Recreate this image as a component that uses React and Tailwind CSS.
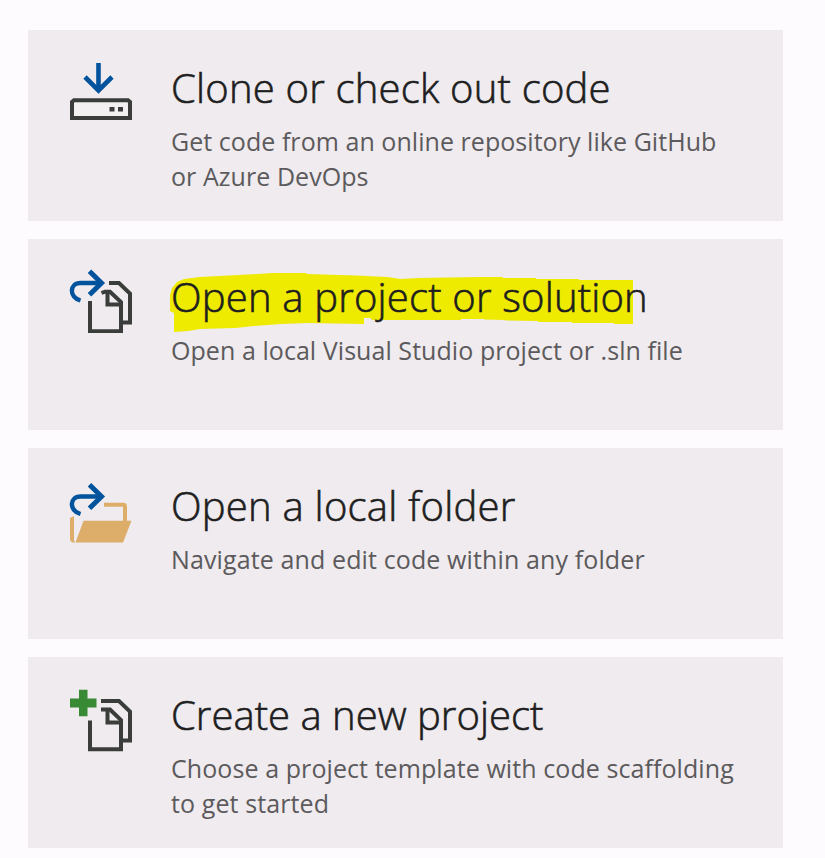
const FONT = "font-['Open_Sans','Noto_Sans',sans-serif]";

function Arrow({ y }) {
  return (
    <g fill="none" stroke="#00539c" strokeWidth="4.4">
      <path d={`M102 ${y}H80.5C69.5 ${y} 68.5 ${y + 14} 80.5 ${y + 17.5}`} />
      <path d={`M89.5 ${y - 11.8}L101.5 ${y}L89.5 ${y + 11.8}`} strokeWidth="5" />
    </g>
  );
}

function CloneIcon() {
  return (
    <svg className="block size-16" viewBox="69 60 64 64">
      <g fill="none" stroke="#00539c" strokeWidth="4.6">
        <path d="M98.5 63V90" />
        <path d="M85 77L98.5 90.5L112 77" />
      </g>
      <path d="M72 118V102L74 100.3H128L130 102V118Z" fill="#f2f0f1" stroke="#3b3d3b" strokeWidth="4" />
      <path d="M109.5 107h5v4.5h-5zM118 107h5v4.5h-5z" fill="#3b3d3b" />
    </svg>
  );
}

function ProjectIcon() {
  return (
    <svg className="block size-16" viewBox="69 269 64 64">
      <Arrow y={283} />
      <g fill="none" stroke="#3b3d3b" strokeWidth="4">
        <path d="M109 283H119L130 293.5V322.5H122" />
        <path d="M90 301V331.3H121V302L110 291.7H105L101.5 293" />
        <path d="M107.5 291V304.5H121" />
      </g>
    </svg>
  );
}

function FolderIcon() {
  return (
    <svg className="block size-16" viewBox="69 480 64 64">
      <path d="M70 518L74 516V540L75 542.5H73Q70 542 70 538Z" fill="#dcae69" />
      <path d="M83.5 520.7H131.5L123 542.5H75.5Z" fill="#dcae69" />
      <path d="M104 504.8H123.5Q125 504.8 125 507V522" fill="none" stroke="#dcae69" strokeWidth="4" />
      <Arrow y={496.5} />
    </svg>
  );
}

function NewIcon() {
  return (
    <svg className="block size-16" viewBox="69 688 64 64">
      <path d="M79 689.7h8.5v8.8h9v9H87.5v8.8H79v-8.8h-9v-9h9z" fill="#388a34" />
      <g fill="none" stroke="#3b3d3b" strokeWidth="4">
        <path d="M101 701H119L130 711.5V740.5H122" />
        <path d="M90 720.5V749.3H121V720L110 709.5H101" />
        <path d="M107.5 709V722.5H121" />
      </g>
    </svg>
  );
}

function Highlight() {
  return (
    <svg className="absolute -left-[3px] top-8 h-16 w-[470px]" viewBox="168 271 470 64">
      <path
        fill="#eeea00"
        d="M170 295L172 288L177 282L184 279L200 277L219 276L248 274.5L272 273H306L307 274L356 275.5L387 277L401 279L418 278L480 277H503V278H536V279H579V280H633V324H614V323H572V322H538V321L505 320.5V320L484 319.5V319H461V320H372L370 318H364V324L308 323L281 324L254 326L235 328L200 329L188 331L174 332V313L170 311Z"
      />
    </svg>
  );
}

const cards = [
  { icon: <CloneIcon />, pad: "pt-[30px]", title: "Clone or check out code", track: "tracking-[0.2px]",
    lines: [["Get code from an online repository like GitHub", "tracking-[0.05px]"], ["or Azure DevOps", "tracking-[0.06px]"]] },
  { icon: <ProjectIcon />, pad: "pt-[30px]", title: "Open a project or solution", track: "tracking-[0.18px]", marked: true,
    lines: [["Open a local Visual Studio project or .sln file", "tracking-[0.06px]"]] },
  { icon: <FolderIcon />, pad: "pt-8", title: "Open a local folder", track: "tracking-[0.24px]",
    lines: [["Navigate and edit code within any folder", "tracking-[0.12px]"]] },
  { icon: <NewIcon />, pad: "pt-[31px]", title: "Create a new project", track: "tracking-[0.02px]",
    lines: [["Choose a project template with code scaffolding", "tracking-[0.08px]"], ["to get started", "tracking-[0.1px]"]] },
];

export default function App() {
  return (
    <main className={`flex h-[858px] w-[825px] flex-col gap-[18px] overflow-hidden bg-[#fefbfe] pl-7 pt-[30px] ${FONT}`}>
      {cards.map((c) => (
        <button key={c.title} className="flex h-[191px] w-[755px] shrink-0 items-start bg-[#efebee] pl-[41px] text-left">
          <span className={`w-[102px] shrink-0 ${c.pad}`}>{c.icon}</span>
          <span className="relative block pt-8">
            {c.marked && <Highlight />}
            <span className={`relative block w-max whitespace-nowrap text-[40px] font-light leading-[52px] text-[#1e1e1e] [-webkit-text-stroke:0.6px_#1e1e1e] ${c.track}`}>{c.title}</span>
            <span className="relative block pt-2.5 text-[25px] leading-[35px] text-[#5c5a5c]">
              {c.lines.map(([t, track]) => (
                <span key={t} className={`block w-max whitespace-nowrap ${track}`}>{t}</span>
              ))}
            </span>
          </span>
        </button>
      ))}
    </main>
  );
}
